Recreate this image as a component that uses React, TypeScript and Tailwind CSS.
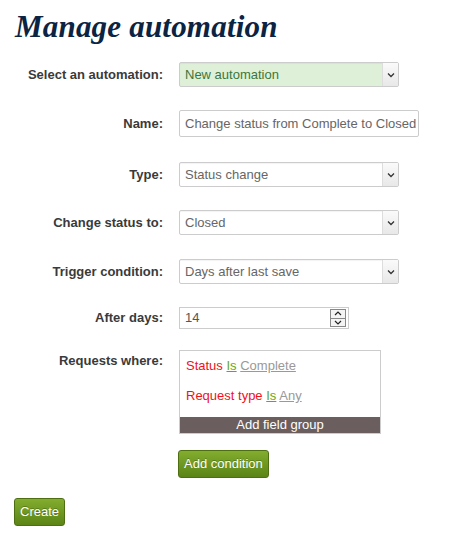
import React from 'react';

const SelectBox = ({ value, width, green }: { value: string; width: string; green?: boolean }) => (
  <div
    className={`flex h-[25px] ${width} items-stretch rounded-[2px] border border-[#cccccc] ${
      green ? 'bg-[#dff0d8] text-[#3c763d]' : 'bg-white text-[#666666]'
    } shadow-[inset_0_1px_1px_rgba(0,0,0,0.05)]`}
  >
    <span className="flex flex-1 items-center pl-[5px] text-[13px]">{value}</span>
    <span className="flex w-[16px] items-center justify-center border-l border-[#dddddd] bg-gradient-to-b from-[#fafafa] to-[#e8e8e8]">
      <svg width="8" height="6" viewBox="0 0 8 6">
        <path d="M1 1.5 L4 4.5 L7 1.5" fill="none" stroke="#333" strokeWidth="1.3" />
      </svg>
    </span>
  </div>
);

const Row = ({ label, children, className = '', top }: { label: string; children: React.ReactNode; className?: string; top?: boolean }) => (
  <div className={`flex ${top ? 'items-start' : 'items-center'} ${className}`}>
    <label className={`w-[163px] shrink-0 text-right text-[13px] font-bold text-[#3a3a3a] ${top ? 'pt-[1px]' : ''}`}>{label}</label>
    <div className="ml-[16px]">{children}</div>
  </div>
);

const GreenButton = ({ children }: { children: React.ReactNode }) => (
  <button className="h-[28px] rounded-[3px] border border-[#4d6f12] bg-gradient-to-b from-[#82ad2e] to-[#5b8416] px-[5px] text-[13px] text-white [text-shadow:0_-1px_0_rgba(0,0,0,0.25)]">
    {children}
  </button>
);

export default function App() {
  return (
    <div className="min-h-[546px] w-[458px] bg-white font-['Liberation_Sans',Arial,sans-serif]">
      <h1 className="pl-[15px] pt-[9px] font-['Liberation_Serif',serif] text-[31px] font-bold italic leading-[36px] tracking-[0.2px] text-[#0b2444]">
        Manage automation
      </h1>

      <Row label="Select an automation:" className="mt-[17px]">
        <SelectBox value="New automation" width="w-[220px]" green />
      </Row>

      <Row label="Name:" className="mt-[23px]">
        <div className="flex h-[27px] w-[240px] items-center rounded-[2px] border border-[#cccccc] bg-white pl-[5px] text-[13px] text-[#666666]">
          Change status from Complete to Closed
        </div>
      </Row>

      <Row label="Type:" className="mt-[25px]">
        <SelectBox value="Status change" width="w-[220px]" />
      </Row>

      <Row label="Change status to:" className="mt-[23px]">
        <SelectBox value="Closed" width="w-[220px]" />
      </Row>

      <Row label="Trigger condition:" className="mt-[24px]">
        <SelectBox value="Days after last save" width="w-[220px]" />
      </Row>

      <Row label="After days:" className="mt-[23px]">
        <div className="flex h-[22px] w-[170px] items-center justify-between border border-[#cccccc] bg-white pl-[5px] pr-[2px] text-[13px] text-[#555555]">
          <span>14</span>
          <span className="flex h-[18px] w-[16px] flex-col border border-[#888888] bg-[#f4f4f4]">
            <span className="flex flex-1 items-center justify-center border-b border-[#888888]">
              <svg width="8" height="5" viewBox="0 0 8 5">
                <path d="M1 4 L4 1 L7 4" fill="none" stroke="#222" strokeWidth="1.2" />
              </svg>
            </span>
            <span className="flex flex-1 items-center justify-center">
              <svg width="8" height="5" viewBox="0 0 8 5">
                <path d="M1 1 L4 4 L7 1" fill="none" stroke="#222" strokeWidth="1.2" />
              </svg>
            </span>
          </span>
        </div>
      </Row>

      <Row label="Requests where:" className="mt-[21px]" top>
        <div className="w-[202px] border border-[#cccccc] bg-white">
          <div className="px-[6px] pt-[7px] text-[13px] leading-[16px]">
            <div>
              <span className="text-[#ee1122]">Status</span>{' '}
              <span className="text-[#66a81a] underline">Is</span>{' '}
              <span className="text-[#999999] underline">Complete</span>
            </div>
            <div className="mt-[14px]">
              <span className="text-[#ee1122]">Request type</span>{' '}
              <span className="text-[#66a81a] underline">Is</span>{' '}
              <span className="text-[#999999] underline">Any</span>
            </div>
          </div>
          <div className="mt-[13px] h-[16px] bg-[#6b5e5e] text-center text-[13px] leading-[16px] text-white">
            Add field group
          </div>
        </div>
      </Row>

      <div className="ml-[178px] mt-[16px]">
        <GreenButton>Add condition</GreenButton>
      </div>

      <div className="ml-[14px] mt-[20px]">
        <GreenButton>Create</GreenButton>
      </div>
    </div>
  );
}
